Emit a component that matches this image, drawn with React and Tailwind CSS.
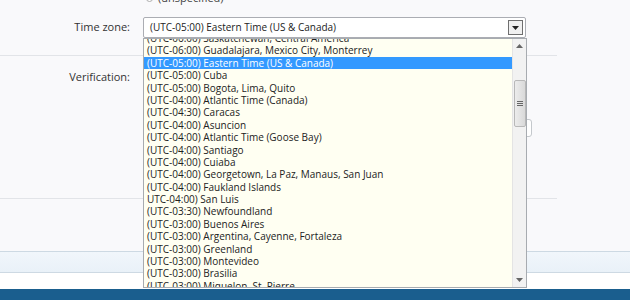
import React from 'react';

const zones = [
  '(UTC-06:00) Saskatchewan, Central America',
  '(UTC-06:00) Guadalajara, Mexico City, Monterrey',
  '(UTC-05:00) Eastern Time (US & Canada)',
  '(UTC-05:00) Cuba',
  '(UTC-05:00) Bogota, Lima, Quito',
  '(UTC-04:00) Atlantic Time (Canada)',
  '(UTC-04:30) Caracas',
  '(UTC-04:00) Asuncion',
  '(UTC-04:00) Atlantic Time (Goose Bay)',
  '(UTC-04:00) Santiago',
  '(UTC-04:00) Cuiaba',
  '(UTC-04:00) Georgetown, La Paz, Manaus, San Juan',
  '(UTC-04:00) Faukland Islands',
  'UTC-04:00) San Luis',
  '(UTC-03:30) Newfoundland',
  '(UTC-03:00) Buenos Aires',
  '(UTC-03:00) Argentina, Cayenne, Fortaleza',
  '(UTC-03:00) Greenland',
  '(UTC-03:00) Montevideo',
  '(UTC-03:00) Brasilia',
  '(UTC-03:00) Miquelon, St. Pierre',
  '(UTC-02:00) Mid-Atlantic',
];

const selected = 2;

const TimeZoneList = () => (
  <div className="absolute left-[143px] top-[38px] w-[384px] h-[250px] border border-[#a7abb0] bg-[#fffff2] flex overflow-hidden text-[10px]">
    <div className="flex-1 overflow-hidden">
      <div className="-mt-[7px]">
        {zones.map((z, i) => (
          <div
            key={z}
            className={
              'h-[12.4px] leading-[12.4px] pl-[3px] whitespace-nowrap ' +
              (i === selected ? 'bg-[#3399ff] text-white' : 'text-[#222]')
            }
          >
            {z}
          </div>
        ))}
      </div>
    </div>
    {/* scrollbar */}
    <div className="w-[14px] bg-[#f2f2f2] border-l border-[#e4e4e4] flex flex-col items-center">
      <div className="h-[14px] flex items-center justify-center">
        <svg width="7" height="4" viewBox="0 0 7 4"><path d="M0 4 L3.5 0 L7 4 Z" fill="#666" /></svg>
      </div>
      <div className="mt-[27px] w-[12px] h-[47px] rounded-[2px] border border-[#b8b8b8] bg-gradient-to-r from-[#ececec] to-[#d9d9d9] flex items-center justify-center">
        <div className="flex flex-col gap-[1px]">
          <div className="w-[6px] h-[1px] bg-[#666]" />
          <div className="w-[6px] h-[1px] bg-[#666]" />
          <div className="w-[6px] h-[1px] bg-[#666]" />
        </div>
      </div>
      <div className="flex-1" />
      <div className="h-[14px] flex items-center justify-center">
        <svg width="7" height="4" viewBox="0 0 7 4"><path d="M0 0 L3.5 4 L7 0 Z" fill="#666" /></svg>
      </div>
    </div>
  </div>
);

export default function App() {
  return (
    <div
      className="relative w-[630px] h-[300px] overflow-hidden bg-[#f9f9fb] text-[10px]"
      style={{ fontFamily: '"Open Sans", "Noto Sans", sans-serif' }}
    >
      <div className="flex flex-col h-full">
        {/* radio row, cut at top */}
        <div className="h-[10px] -mt-[7px] flex items-center pl-[146px] gap-[5px] text-[#444] text-[11px]">
          <span className="w-[7px] h-[7px] rounded-full border border-[#aaa] bg-white" />
          <span>(unspecified)</span>
        </div>

        {/* time zone row */}
        <div className="flex items-center mt-[14px] h-[21px]">
          <div className="w-[131px] text-right pr-[1px] text-[11px] text-[#333]">Time zone:</div>
          <div className="ml-[12px] w-[383px] h-[21px] border border-[#abadb3] rounded-[2px] bg-white flex items-center pl-[6px] pr-[2px]">
            <span className="flex-1 text-[#222] whitespace-nowrap">(UTC-05:00) Eastern Time (US &amp; Canada)</span>
            <span className="w-[15px] h-[15px] border border-[#6f6f6f] bg-[#f0f0f0] flex items-center justify-center">
              <svg width="7" height="4" viewBox="0 0 7 4"><path d="M0 0 L3.5 4 L7 0 Z" fill="#222" /></svg>
            </span>
          </div>
        </div>

        <div className="mt-[17px] w-[557px] h-px bg-[#e2e4e8]" />

        {/* verification row */}
        <div className="flex mt-[13px] h-[16px] items-center">
          <div className="w-[131px] text-right pr-[1px] text-[11px] text-[#333]">Verification:</div>
        </div>
        <div className="ml-[143px] mt-[34px] w-[389px] h-[18px] border border-[#c4c8cc] rounded-[3px] bg-white" />

        <div className="mt-[61px] w-[557px] h-px bg-[#e2e4e8]" />

        {/* footer */}
        <div className="mt-[52px] h-[22px] border-t border-b border-[#cdd9e3] bg-gradient-to-b from-[#f1f6fb] to-[#e9f1f8]" />
        <div className="h-[16px] bg-white" />
        <div className="flex-1 bg-[#1a5e8e]" />
      </div>

      <TimeZoneList />
    </div>
  );
}
